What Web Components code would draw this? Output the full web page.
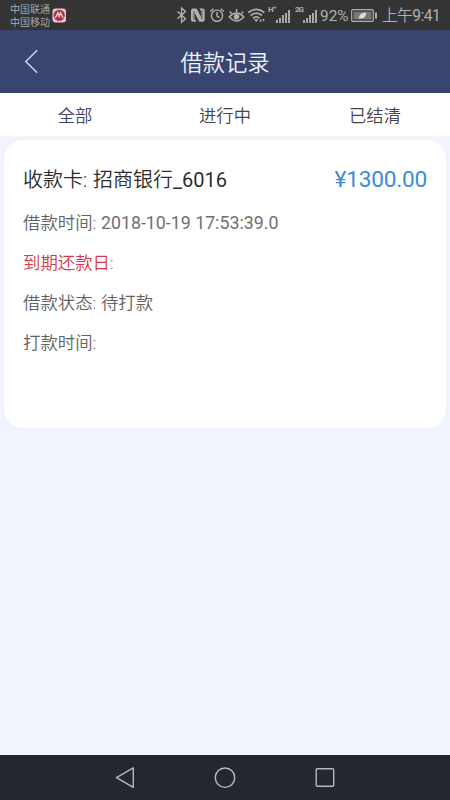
<!DOCTYPE html>
<html lang="zh-CN">
<head>
<meta charset="utf-8">
<title>借款记录</title>
<style>
html,body{margin:0;height:100%}
body{font-family:Roboto,"Noto Sans CJK SC",sans-serif;background:#f0f4fd;overflow:hidden}
</style>
</head>
<body>
<loan-app></loan-app>
<script>
const define = (name, html) => {
  const t = document.createElement('template');
  t.innerHTML = html;
  customElements.define(name, class extends HTMLElement {
    constructor() {
      super();
      this.attachShadow({mode: 'open'}).append(t.content.cloneNode(true));
    }
  });
};

define('signal-bars', `<style>
:host{display:flex;align-items:flex-end;height:14px;gap:1px;margin-top:1px}
i{width:2px;background:#a8a8a8}
</style><i style="height:3px"></i><i style="height:5px"></i><i style="height:8px"></i><i style="height:10px"></i><i style="height:13px"></i>`);

define('status-bar', `<style>
:host{display:flex;height:30px;background:#343434;color:#b0b0b0;align-items:center;box-sizing:border-box;padding:0 9px 0 10px}
.carrier{font-size:10px;line-height:13.5px;font-weight:350;white-space:nowrap;padding-top:2px;width:40px}
svg{display:block;flex:none;fill:none;stroke:#b0b0b0;stroke-width:1.4}
.bank{margin-left:2px}
.right{display:flex;align-items:center;margin-left:auto;height:30px}
.net{font:700 8px/8px Roboto,sans-serif;width:8px;height:18px;white-space:nowrap;letter-spacing:-.5px}
.net.g{letter-spacing:-1px}
.pct{font-size:15.4px;margin-left:3px;width:28px;white-space:nowrap;padding-top:2px;height:28px;line-height:28px}
.time{font-size:15.6px;white-space:nowrap;width:59px;margin-left:4px;padding-top:2px;height:28px;line-height:28px;letter-spacing:-.5px}
.time b{font-weight:350}
</style>
<div class="carrier">中国联通<br>中国移动</div>
<svg class="bank" width="15" height="30" viewBox="52 0 15 30"><rect x="52.5" y="8.5" width="13.5" height="14" rx="3" fill="#ddc9cc" stroke="none"/><circle cx="59.2" cy="15.3" r="5.6" fill="#b52e43" stroke="none"/><path d="m55.4 17.8 2.5-5 1.3 3.6 1.3-3.6 2.5 5" stroke="#eedde0" stroke-width="1.3"/></svg>
<div class="right">
<svg width="12" height="30" viewBox="176 0 12 30"><path d="m177.5 11.5 8 7.2-3.9 3.5V8l3.9 3.5-8 7.2"/></svg>
<svg style="margin-left:2px" width="16" height="30" viewBox="190 0 16 30"><path d="M191 10.5Q191 8.5 193 8.5h3.6l4.3 8.3V11l-1.3-2.5h3.1q2 0 2 2v9.3q0 2-2 2h-3.4l-4.5-8.6v5.6l1.5 3h-3.3q-2 0-2-2Z" fill="#b0b0b0" stroke="none"/><path d="M194 11.5v8.2M201.8 10.5v8.6" stroke="#343434" stroke-width=".8"/></svg>
<svg style="margin-left:3px" width="16" height="30" viewBox="209 0 16 30"><circle cx="217" cy="15.7" r="5.6"/><path d="M217 12v4l2.6 1.7M210.2 11.5l3.2-2.8M223.8 11.5l-3.2-2.8"/></svg>
<svg style="margin-left:3px" width="18" height="30" viewBox="228 0 18 30"><path d="M229.3 16.7q7-7.6 14.5 0-7 8.4-14.5 0Z" stroke-width="1.5"/><circle cx="236.5" cy="16.7" r="2.8" fill="#b0b0b0" stroke="none"/><path d="M236.5 9v3M229.8 11.5l1.8 2M243.2 11.5l-1.8 2" stroke-width="1.5"/></svg>
<svg style="margin-left:1px" width="20" height="30" viewBox="247 0 20 30"><path d="M248.3 12.5q8-6.4 16 0M250.6 15.5q5.7-4.6 11.4 0M253 18.3q3.4-2.7 6.6 0" stroke-width="1.7"/><path d="m253.8 19.2 2.5 2.8 2.3-2.8Z" fill="#b0b0b0" stroke="none"/><path d="m259.4 21.5 1.3-2.5 1.3 2.5ZM262.2 19l1.3 2.5 1.3-2.5Z" fill="#b0b0b0" stroke="none"/></svg>
<span class="net" style="margin-left:1px">H⁺</span><signal-bars></signal-bars>
<span class="net g" style="margin-left:5px">2G</span><signal-bars></signal-bars>
<span class="pct">92%</span>
<svg style="margin-left:3px" width="27" height="30" viewBox="351 0 27 30"><rect x="351.7" y="9.7" width="21.6" height="11.6" rx="1" stroke-width="1.2"/><rect x="353.5" y="11.5" width="18" height="8" fill="#777" stroke="none"/><path d="M376 12.5v6" stroke-width="2"/><path d="M358.7 18.8q0-5.8 7.5-6.2-.2 6.8-6.2 5.6Z" fill="#ddd" stroke="none"/></svg>
<span class="time"><b>上午</b>9:41</span>
</div>`);

define('nav-header', `<style>
:host{display:grid;grid-template-columns:60px 1fr 60px;align-items:center;height:63px;background:#39456f;color:#eef2ff}
svg{display:block;margin-left:23px;fill:none;stroke:#ccd5f4;stroke-width:1.5}
h1{margin:0;font-size:22.3px;font-weight:350;text-align:center;line-height:62px;padding-top:2px;height:61px}
</style>
<svg width="17" height="26" viewBox="0 0 17 26"><path d="M14.2 1.3 2.8 12.5l11.4 11.2"/></svg><h1><slot></slot></h1>`);

define('tab-item', `<style>
:host{display:block;flex:1;text-align:center;font-size:17.3px;font-weight:350;line-height:46px;color:#444}
:host([active]){color:#39456f}
</style><slot></slot>`);
define('tab-bar', `<style>:host{display:flex;height:43px;background:#fff;margin-bottom:4px;box-shadow:0 2px 2px #f6f6fa}</style><slot></slot>`);

define('info-row', `<style>
:host{display:block;font-size:17.4px;font-weight:350;height:40px;line-height:40px;color:#626262;white-space:nowrap;word-spacing:.5px}
:host([due]){color:#d33b47}
::slotted(.date){font-weight:400;font-size:17.8px;line-height:38px;color:#707070;word-spacing:0}
</style><slot></slot>`);

define('loan-card', `<style>
:host{display:block;box-sizing:border-box;height:288px;margin:0 4px;padding:19px 19px 0;background:#fff;border-radius:19px;box-shadow:0 0 3px #f4f2f8}
.head{display:flex;justify-content:space-between;align-items:center;height:43px;line-height:43px;margin-bottom:1px;color:#2c2c2c;font-size:20px;font-weight:350;white-space:nowrap;word-spacing:1px}
.head b{font-weight:400}
.amount{color:#3c8bdc;font-size:22.6px;font-weight:400;letter-spacing:-.2px;line-height:41px;align-self:flex-start}
</style>
<div class="head"><span><slot name="card"></slot><b><slot name="tail"></slot></b></span><span class="amount"><slot name="amount"></slot></span></div>
<slot></slot>`);

define('system-nav', `<style>
:host{display:flex;justify-content:center;align-items:center;gap:76px;height:45px;background:#232730}
svg{display:block;fill:none;stroke:#b4b8bf;stroke-width:1.4}
</style>
<svg width="24" height="24" viewBox="0 0 24 24"><path d="M20.3 1.8v19.6L3.5 11.6Z" stroke-linejoin="round"/></svg>
<svg width="24" height="24" viewBox="0 0 24 24"><circle cx="12" cy="11.7" r="9.7"/></svg>
<svg width="24" height="24" viewBox="0 0 24 24"><rect x="3.2" y="2.7" width="17.5" height="17.5" rx="1"/></svg>`);

define('loan-app', `<style>
:host{display:flex;flex-direction:column;height:100vh}
main{flex:1}
</style>
<status-bar></status-bar>
<nav-header>借款记录</nav-header>
<tab-bar><tab-item active>全部</tab-item><tab-item>进行中</tab-item><tab-item>已结清</tab-item></tab-bar>
<main><loan-card>
<span slot="card">收款卡: 招商银行</span><span slot="tail">_6016</span><span slot="amount">¥1300.00</span>
<info-row>借款时间: <span class="date">2018-10-19 17:53:39.0</span></info-row>
<info-row due>到期还款日:</info-row>
<info-row>借款状态: 待打款</info-row>
<info-row>打款时间:</info-row>
</loan-card></main>
<system-nav></system-nav>`);
</script>
</body>
</html>
